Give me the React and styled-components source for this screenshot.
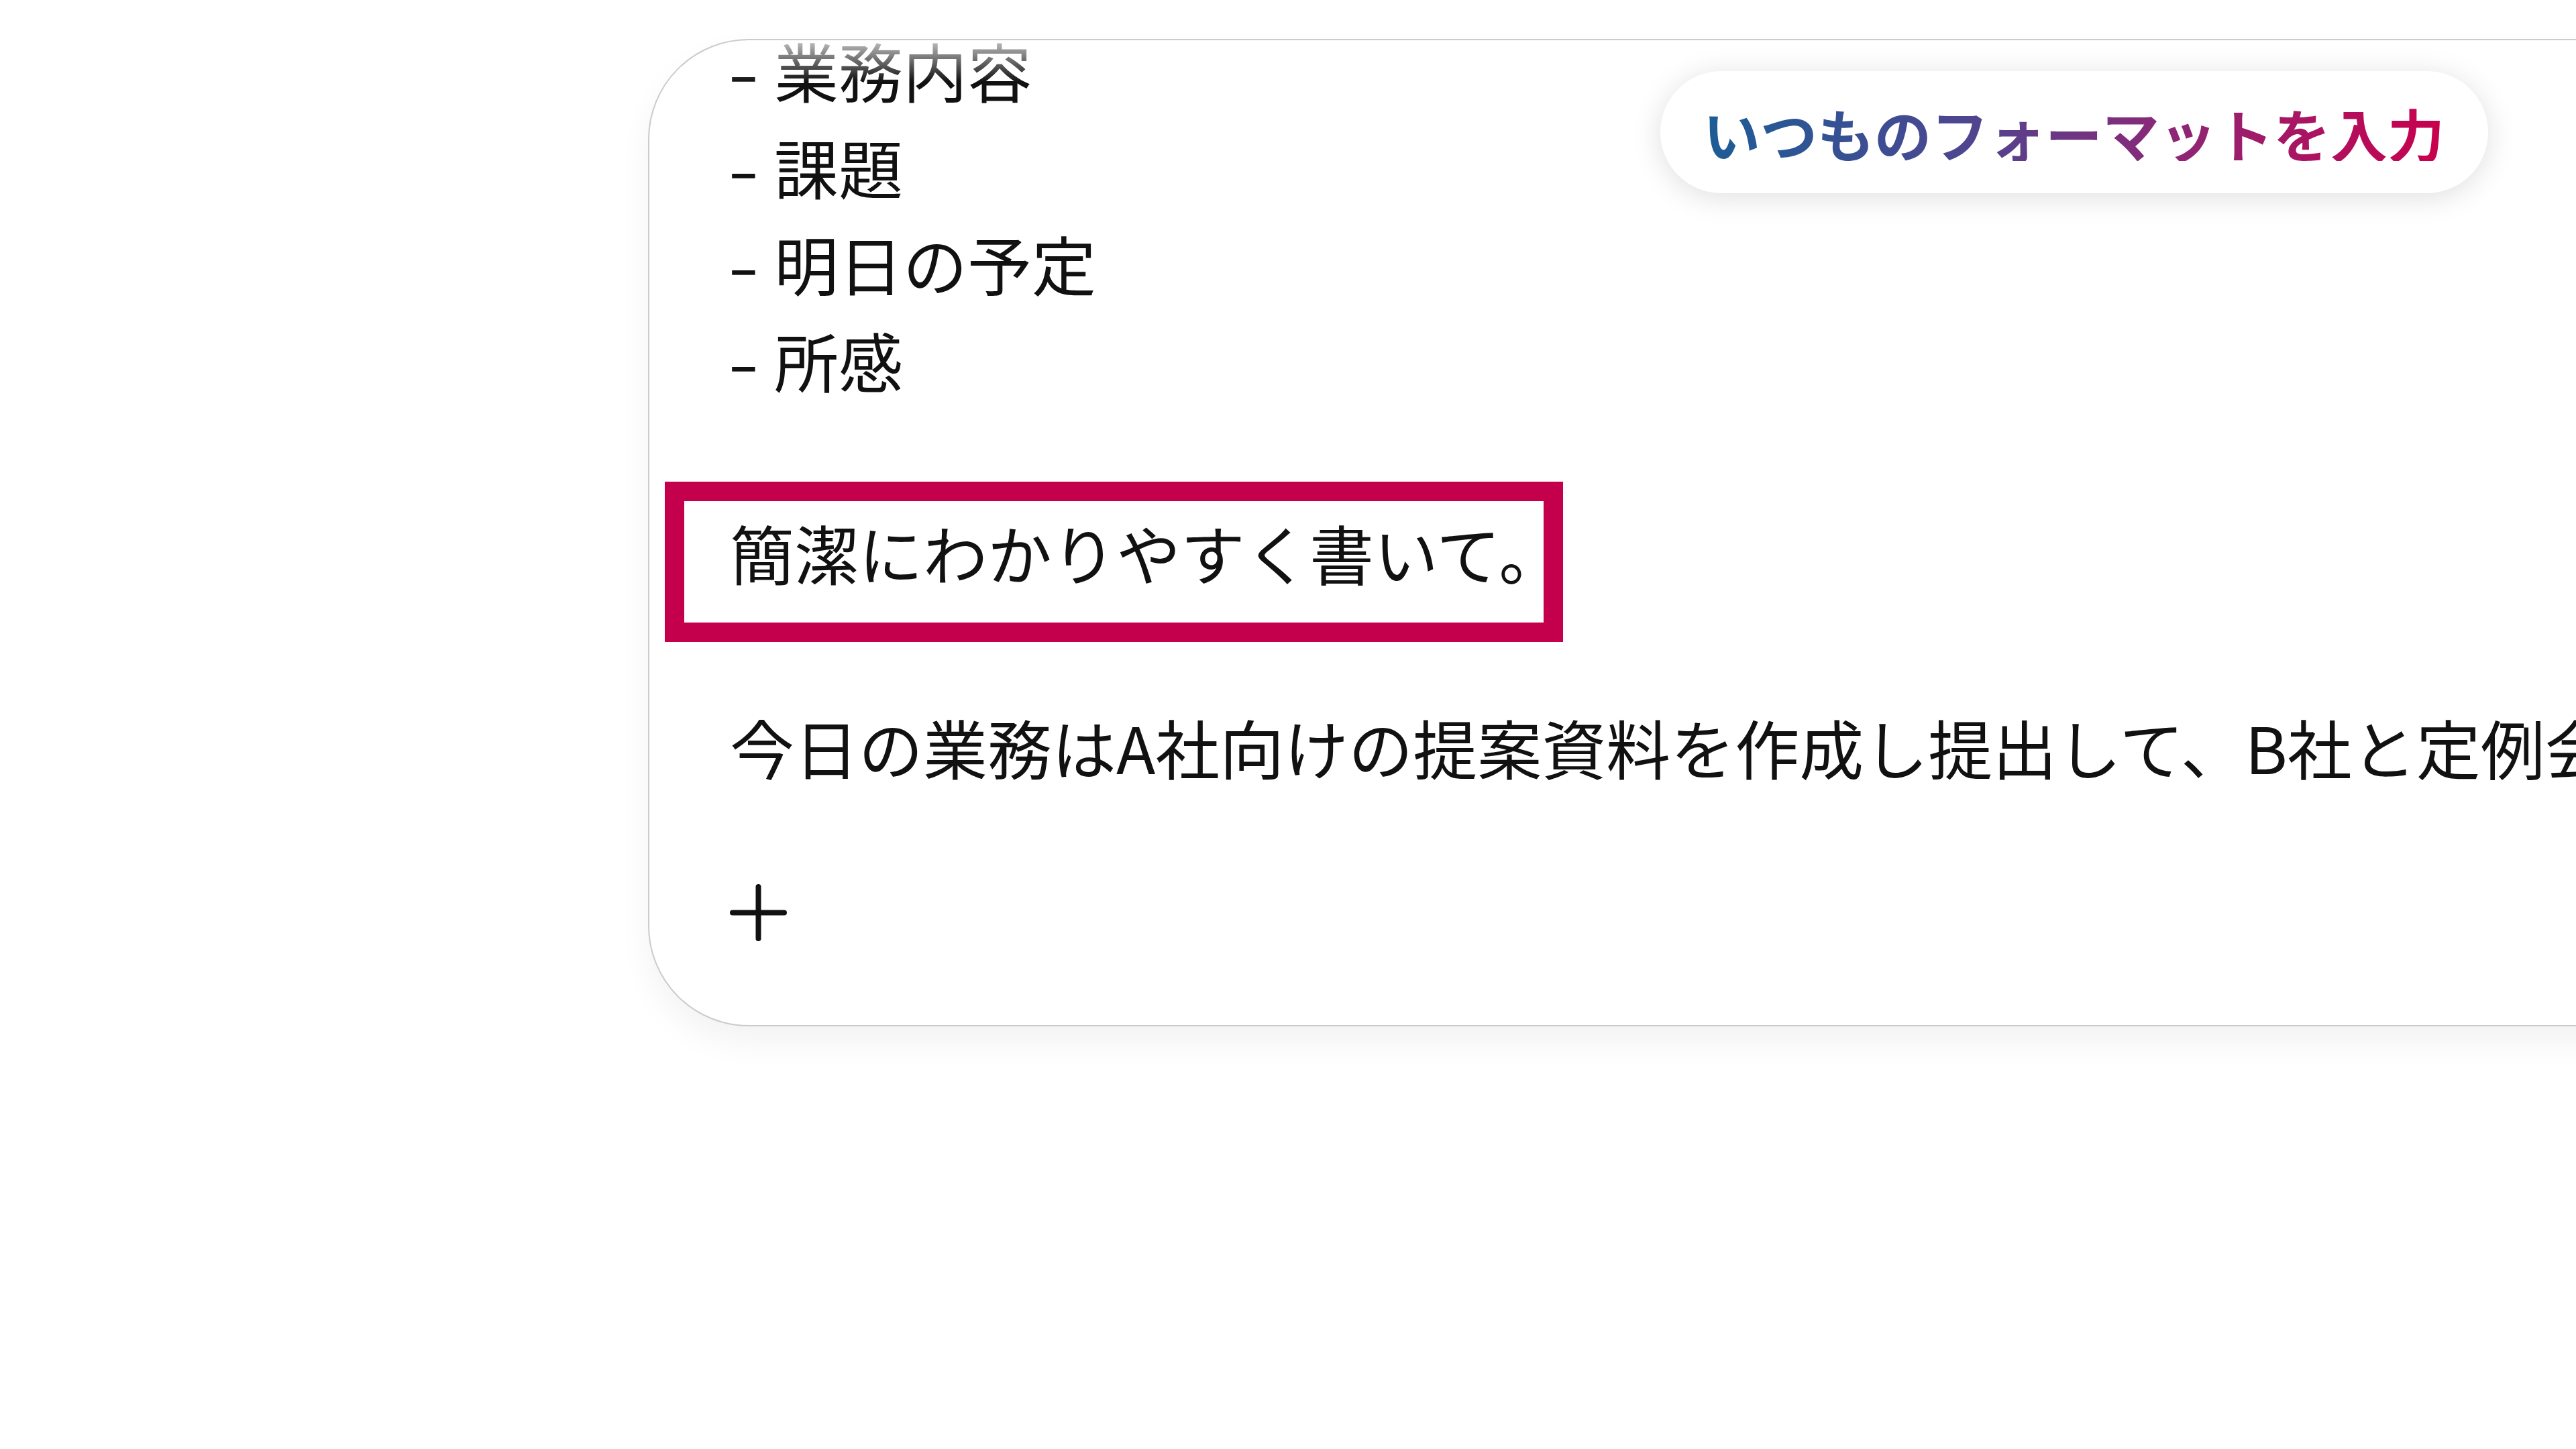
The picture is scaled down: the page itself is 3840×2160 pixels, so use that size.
import React from "react";
import styled, { createGlobalStyle } from "styled-components";

const GlobalStyle = createGlobalStyle`
  html, body {
    margin: 0;
    padding: 0;
    background: #ffffff;
    overflow: hidden;
  }
  body {
    font-family: "Noto Sans CJK JP", "Noto Sans", sans-serif;
    color: #111111;
  }
`;

const Page = styled.div`
  width: 3840px;
  height: 2160px;
  padding: 58px 0 0 966px;
  box-sizing: border-box;
`;

const Card = styled.div`
  position: relative;
  width: 3300px;
  background: #ffffff;
  border: 2px solid #cbcbcb;
  border-radius: 150px;
  box-shadow: 0 24px 48px rgba(0, 0, 0, 0.05);
`;

const Viewport = styled.div`
  overflow: hidden;
  border-radius: 150px;
  padding: 0 0 125px 120px;
  -webkit-mask-image: linear-gradient(to bottom, rgba(0, 0, 0, 0.25) 0px, #000 62px);
  mask-image: linear-gradient(to bottom, rgba(0, 0, 0, 0.25) 0px, #000 62px);
`;

const List = styled.div`
  margin-top: -28px;
  display: flex;
  flex-direction: column;
`;

const Line = styled.div`
  font-size: 96px;
  line-height: 144px;
  white-space: nowrap;
  display: flex;
  align-items: center;
`;

const Bullet = styled.span`
  display: inline-block;
  width: 66px;
  flex: none;

  span {
    display: inline-block;
    margin-left: -3px;
    transform: scaleX(1.4);
    transform-origin: left center;
  }
`;

const Highlight = styled.div`
  margin: 110px 0 0 -97px;
  width: 1339px;
  height: 239px;
  box-sizing: border-box;
  border: 29px solid #c4004c;
  padding: 4px 0 0 68px;
  font-size: 96px;
  line-height: 144px;
  white-space: nowrap;
  overflow: hidden;
`;

const Paragraph = styled.div`
  margin-top: 84px;
  font-size: 96px;
  line-height: 144px;
  white-space: nowrap;
`;

const AddButton = styled.div`
  margin-top: 133px;
  width: 85px;
  height: 85px;
  color: #111111;

  svg {
    display: block;
  }
`;

const FormatPill = styled.div`
  position: absolute;
  left: 1507px;
  top: 46px;
  width: 1234px;
  height: 182px;
  box-sizing: border-box;
  padding-left: 64px;
  display: flex;
  align-items: center;
  background: #ffffff;
  border-radius: 91px;
  box-shadow: 0 6px 44px rgba(0, 0, 0, 0.13);
`;

const GradientText = styled.span`
  font-size: 85px;
  font-weight: 700;
  line-height: 1;
  white-space: nowrap;
  background: linear-gradient(90deg, #1c5d96 0%, #4d4690 35%, #8a2877 62%, #c9004d 100%);
  -webkit-background-clip: text;
  background-clip: text;
  color: transparent;
`;

const PlusIcon = () => (
  <svg width="85" height="85" viewBox="0 0 85 85" fill="none">
    <path
      d="M42.5 4V81M4 42.5H81"
      stroke="currentColor"
      strokeWidth="8"
      strokeLinecap="round"
    />
  </svg>
);

const items = ["業務内容", "課題", "明日の予定", "所感"];

const App = () => {
  return (
    <Page>
      <GlobalStyle />
      <Card>
        <Viewport>
          <List>
            {items.map((item) => (
              <Line key={item}>
                <Bullet>
                  <span>-</span>
                </Bullet>
                {item}
              </Line>
            ))}
          </List>
          <Highlight>簡潔にわかりやすく書いて。</Highlight>
          <Paragraph>
            今日の業務はA社向けの提案資料を作成し提出して、B社と定例会議を行いました。
          </Paragraph>
          <AddButton>
            <PlusIcon />
          </AddButton>
        </Viewport>
        <FormatPill>
          <GradientText>いつものフォーマットを入力</GradientText>
        </FormatPill>
      </Card>
    </Page>
  );
};

export default App;
